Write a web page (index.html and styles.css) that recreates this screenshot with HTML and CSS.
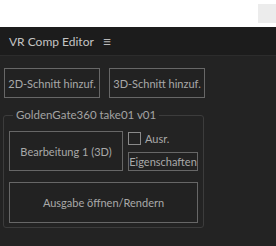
FILE: index.html
```html
<!DOCTYPE html>
<html>

<head>
    <title>VR Comp Editor</title>
    <link rel="stylesheet" href="styles.css">
</head>

<body>
    <div class="topbar">
        <div class="grip"></div>
    </div>

    <div class="panel">
        <div class="header">
            <span class="title">VR Comp Editor</span>
            <span class="menu">&#8801;</span>
        </div>

        <div class="content">
            <div class="row">
                <button class="btn add">2D-Schnitt hinzuf.</button>
                <button class="btn add">3D-Schnitt hinzuf.</button>
            </div>

            <fieldset class="group">
                <legend>GoldenGate360 take01 v01</legend>
                <div class="edit-row">
                    <button class="btn edit">Bearbeitung 1 (3D)</button>
                    <div class="side">
                        <label class="check"><span class="box"></span>Ausr.</label>
                        <button class="btn props">Eigenschaften</button>
                    </div>
                </div>
                <button class="btn render">Ausgabe öffnen/Rendern</button>
            </fieldset>
        </div>
    </div>
</body>

</html>
```

FILE: styles.css
```css
body {
    margin: 0;
    background-color: #ffffff;
    font-family: Lato, "Liberation Sans", sans-serif;
    font-size: 11px;
}

.topbar {
    height: 27px;
    display: flex;
    justify-content: flex-end;
    align-items: flex-start;
}

.grip {
    width: 18px;
    height: 19px;
    margin-top: 4px;
    background-color: #ececec;
}

.panel {
    height: 219px;
    background-color: #232323;
}

.header {
    height: 28px;
    background-color: #1c1c1c;
    border-bottom: 1px solid #2c2c2c;
    display: flex;
    align-items: center;
    padding-left: 9px;
    color: #c4c4c4;
    font-size: 12px;
}

.menu {
    margin-left: 9px;
    font-size: 15px;
    color: #b8b8b8;
}

.content {
    padding: 12px 0 0 3px;
}

.row {
    display: flex;
    gap: 9px;
    padding-left: 1px;
}

.btn {
    background-color: #222222;
    color: #a9a9a9;
    border: 1px solid #676767;
    font-family: inherit;
    font-size: 11px;
    padding: 0;
    margin: 0;
    white-space: nowrap;
}

.add {
    width: 96px;
    height: 30px;
}

.group {
    width: 189px;
    margin: 9px 0 0 0;
    padding: 0 5px 4px 5px;
    border: 1px solid #3c3c3c;
    border-radius: 3px;
}

.group legend {
    margin-left: 4px;
    padding: 0 3px;
    color: #a4a4a4;
    font-size: 11.5px;
    line-height: 16px;
}

.edit-row {
    display: flex;
    gap: 5px;
    margin-top: 8px;
}

.edit {
    width: 114px;
    height: 40px;
}

.side {
    display: flex;
    flex-direction: column;
    gap: 8px;
    padding-top: 1px;
}

.check {
    display: flex;
    align-items: center;
    gap: 4px;
    color: #a9a9a9;
    height: 12px;
}

.box {
    width: 11px;
    height: 11px;
    border: 1px solid #8a8a8a;
}

.props {
    width: 70px;
    height: 19px;
    overflow: hidden;
}

.render {
    display: block;
    width: 189px;
    height: 41px;
    margin-top: 11px;
}
```
